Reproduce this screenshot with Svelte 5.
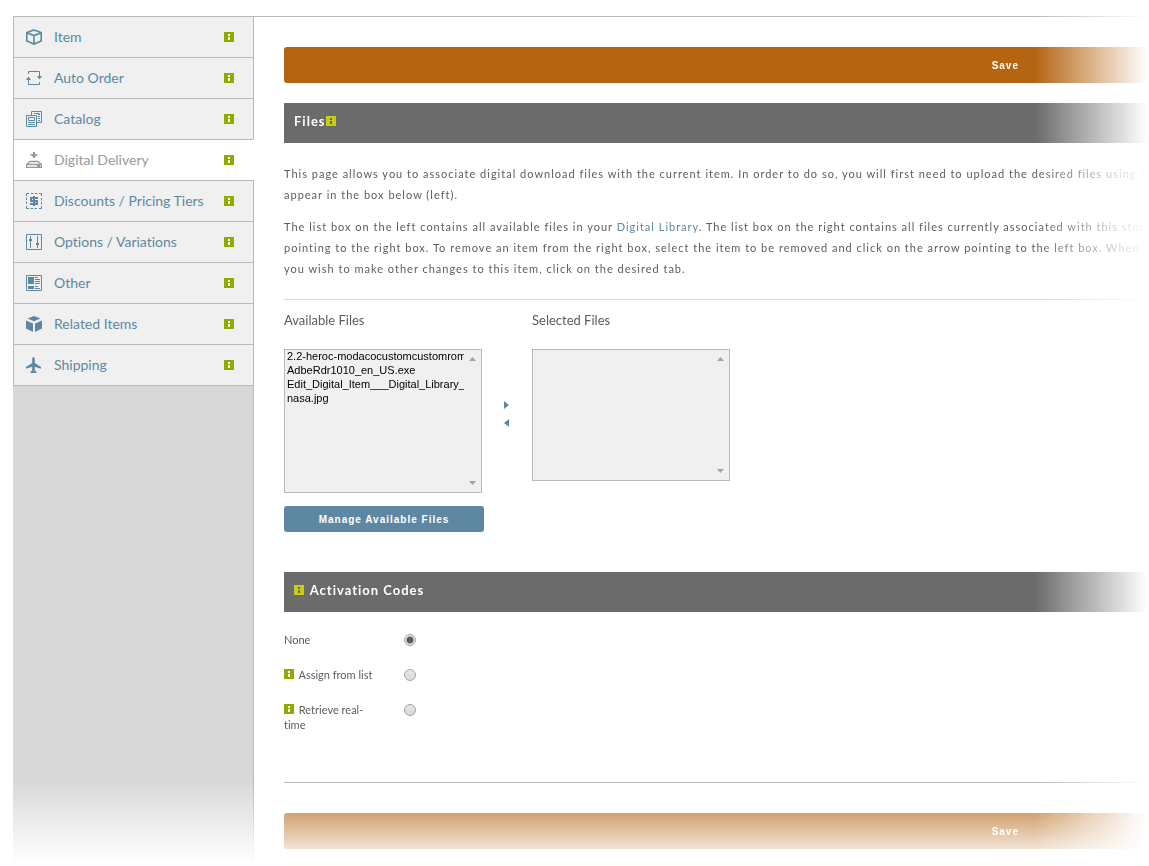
<script lang="ts">
  type Tab = { id: string; label: string };

  const tabs: Tab[] = [
    { id: 'item', label: 'Item' },
    { id: 'auto', label: 'Auto Order' },
    { id: 'catalog', label: 'Catalog' },
    { id: 'digital', label: 'Digital Delivery' },
    { id: 'discounts', label: 'Discounts / Pricing Tiers' },
    { id: 'options', label: 'Options / Variations' },
    { id: 'other', label: 'Other' },
    { id: 'related', label: 'Related Items' },
    { id: 'shipping', label: 'Shipping' }
  ];

  let current = $state('digital');
  let activation = $state('none');
  let available = $state([
    '2.2-heroc-modacocustomcustomrom',
    'AdbeRdr1010_en_US.exe',
    'Edit_Digital_Item___Digital_Library__',
    'nasa.jpg'
  ]);
  let selected: string[] = $state([]);
  let pickedLeft: string[] = $state([]);
  let pickedRight: string[] = $state([]);

  // move the picked files to the right box
  function addFiles() {
    selected = [...selected, ...pickedLeft];
    available = available.filter((f) => !pickedLeft.includes(f));
    pickedLeft = [];
  }

  // and back to the left one
  function removeFiles() {
    available = [...available, ...pickedRight];
    selected = selected.filter((f) => !pickedRight.includes(f));
    pickedRight = [];
  }
</script>

{#snippet info()}
  <svg class="info" viewBox="0 0 10 10" width="10" height="10" shape-rendering="crispEdges" aria-hidden="true">
    <rect class="info-bg" width="10" height="10" />
    <path class="info-mark" d="M4 2h2v2H4zM4 5h2v3H4z" />
  </svg>
{/snippet}

{#snippet icon(id: string)}
  <svg class="icon" viewBox="0 0 16 16" width="16" height="16" aria-hidden="true">
    {#if id === 'item'}
      <path class="line" stroke-width="1.6" d="M8 .9 15.2 3.6v8.3L8 15.1.8 11.9V3.6zM.8 3.8 8 6.6l7.2-2.8M8 6.6V15" />
    {:else if id === 'auto'}
      <path class="line" d="M2.500 4V1.500h11V6M13.500 12v2.500h-11V9" />
      <path d="M2.500 6.500 5 10H0zM13.500 9.500 11 6h5z" />
    {:else if id === 'catalog'}
      <path class="line" d="M.5 4.500h10v11H.5zM2.500 6.500h6v3h-6zM5.500 4V.5h10v11H11M2 11.500h7M2 13.500h7" />
      <path class="line" stroke-width="2" stroke-dasharray="1 1" d="M13 3v8" />
      <path class="line" d="M8 2.500h5.500" />
    {:else if id === 'digital'}
      <path d="M7 0h2v2h2.500v1.500H10v1H9V6H7V4.500H6v-1H4.500V2H7z" />
      <path class="line" stroke-width="1.3" d="M.6 15.400v-2.900l3.400-3h8l3.400 3v2.900zM1 12.500h14M11 14h3" />
    {:else if id === 'discounts'}
      <path class="line" d="M.5 3V.5H3M5 .5h2.500M9 .5h2.500M13 .5h2.500V3M15.500 5v2.500M15.500 9v2.500M15.500 13v2.500H13M11 15.500H8.500M7 15.500H4.500M3 15.500H.5V13M.5 11V8.500M.5 7V4.500" />
      <path class="line" stroke-width="2" d="M12 5H5v3h6v3H4" />
      <path class="line" stroke-width="2" d="M8 3v10" />
    {:else if id === 'options'}
      <path class="line" d="M.5.5h15v15H.5zM4.500 2v12M11.500 2v12" />
      <path d="M3 5h3v2H3zM10 9h3v2h-3z" />
    {:else if id === 'other'}
      <path class="line" d="M.5.5h15v15H.5zM9 2.500h3M9 4.500h5M9 6.500h5M9 8.500h5M9 11.500h3M9 13.500h5" />
      <path d="M2 2h6v7H2zM2 11h6v3H2z" />
    {:else if id === 'related'}
      <path d="M8 0l6.500 2.600L8 5.200 1.500 2.600zM0 4.500l7 3V16l-7-3.500zM16 4.500l-7 3V16l7-3.500z" />
    {:else}
      <path d="M7.500 0c.8 0 1.300 1.200 1.300 2.500V6L15 10v1.700L8.800 9.800v3.700l1.700 1.300V16h-6v-1.200l1.700-1.300V9.800L0 11.700V10l6.200-4V2.500C6.200 1.200 6.700 0 7.500 0z" />
    {/if}
  </svg>
{/snippet}

{#snippet scroller()}
  <span class="scroller" aria-hidden="true">
    <svg viewBox="0 0 7 4" width="7" height="4"><path d="M0 4 3.500 0 7 4z" /></svg>
    <svg viewBox="0 0 7 4" width="7" height="4"><path d="M0 0 3.500 4 7 0z" /></svg>
  </span>
{/snippet}

<div class="page">
  <nav class="sidebar">
    {#each tabs as tab}
      <a href="#{tab.id}" class="tab" class:active={current === tab.id} onclick={() => (current = tab.id)}>
        {@render icon(tab.id)}
        <span class="tab-label">{tab.label}</span>
        {@render info()}
      </a>
    {/each}
    <div class="filler"></div>
  </nav>

  <main class="content">
    <button class="save">Save</button>

    <h2 class="bar">Files{@render info()}</h2>

    <div class="intro">
      <p>
        This page allows you to associate digital download files with the current item. In order to do so, you will first need to upload the desired files using the<br />
        appear in the box below (left).
      </p>
      <p>
        The list box on the left contains all available files in your <a href="#library">Digital Library</a>. The list box on the right contains all files currently associated with this store<br />
        pointing to the right box. To remove an item from the right box, select the item to be removed and click on the arrow pointing to the left box. When you<br />
        you wish to make other changes to this item, click on the desired tab.
      </p>
    </div>

    <section class="files">
      <div class="column">
        <label for="available">Available Files</label>
        <div class="listbox tall">
          <select id="available" multiple bind:value={pickedLeft}>
            {#each available as file}
              <option value={file}>{file}</option>
            {/each}
          </select>
          {@render scroller()}
        </div>
        <button class="manage">Manage Available Files</button>
      </div>

      <div class="arrows">
        <button aria-label="Add" onclick={addFiles}>
          <svg viewBox="0 0 5 8" width="5" height="8"><path d="M0 0 5 4 0 8z" /></svg>
        </button>
        <button aria-label="Remove" onclick={removeFiles}>
          <svg viewBox="0 0 5 8" width="5" height="8"><path d="M5 0 0 4 5 8z" /></svg>
        </button>
      </div>

      <div class="column">
        <label for="selected">Selected Files</label>
        <div class="listbox">
          <select id="selected" multiple bind:value={pickedRight}>
            {#each selected as file}
              <option value={file}>{file}</option>
            {/each}
          </select>
          {@render scroller()}
        </div>
      </div>
    </section>

    <h2 class="bar codes">{@render info()} Activation Codes</h2>

    <div class="choices">
      <div class="choice">
        <label for="none">None</label>
        <input type="radio" id="none" name="activation" value="none" bind:group={activation} />
      </div>
      <div class="choice">
        <label for="assign">{@render info()} Assign from list</label>
        <input type="radio" id="assign" name="activation" value="assign" bind:group={activation} />
      </div>
      <div class="choice">
        <label for="retrieve">{@render info()} Retrieve real-time</label>
        <input type="radio" id="retrieve" name="activation" value="retrieve" bind:group={activation} />
      </div>
    </div>

    <div class="footer">
      <button class="save">Save</button>
    </div>
  </main>
</div>

<style>
  :global(body) {
    background: #fff;
  }

  /* the whole page fades out to the right and to the bottom */
  .page {
    box-sizing: border-box;
    display: flex;
    min-height: 100vh;
    padding: 16px 0 0 13px;
    overflow: hidden;
    font-family: Lato, sans-serif;
    font-variant-ligatures: none;
    color: #5c5c5c;
    mask-image: linear-gradient(to right, #000 calc(100% - 114px), transparent calc(100% - 2px)),
      linear-gradient(to bottom, #000 calc(100% - 86px), transparent calc(100% - 2px));
    mask-composite: intersect;
  }

  .sidebar {
    display: flex;
    flex-direction: column;
    flex: 0 0 241px;
  }

  .tab {
    box-sizing: border-box;
    display: flex;
    align-items: center;
    height: 41px;
    padding: 0 19px 0 12px;
    border: 1px solid #b9b9b9;
    border-bottom: 0;
    background: #f0f0f0;
    color: #5e88a1;
    font-size: 14px;
    text-decoration: none;
  }

  .tab.active {
    border-right-color: #fff;
    background: #fff;
    color: #999;
  }

  .tab-label {
    flex: 1;
    margin-left: 12px;
    padding-bottom: 2px;
  }

  .icon {
    fill: currentColor;
  }

  .line {
    fill: none;
    stroke: currentColor;
  }

  .filler {
    flex: 1;
    border-top: 1px solid #b9b9b9;
    border-right: 1px solid #b9b9b9;
    background: #d8d8d8;
  }

  .info-bg {
    fill: #90ab00;
  }

  .info-mark {
    fill: #fff;
  }

  .bar .info-bg {
    fill: #c8cd12;
  }

  .bar .info-mark {
    fill: #6b6b6b;
  }

  .codes .info,
  .choice .info {
    margin-right: 2px;
  }

  .content {
    flex: 1;
    min-width: 0;
    padding: 30px 0 0 30px;
    border-top: 1px solid #b9b9b9;
  }

  button {
    border: 0;
    cursor: pointer;
    font-family: "Liberation Sans", Arial, sans-serif;
    font-size: 10px;
    font-weight: bold;
    letter-spacing: 1px;
  }

  .save {
    display: block;
    width: 100%;
    height: 36px;
    padding: 0 130px 0 0;
    border-radius: 3px 0 0 3px;
    background: #b56512;
    color: #fff;
    text-align: right;
  }

  .bar {
    box-sizing: border-box;
    height: 40px;
    margin: 20px 0 0;
    padding: 0 10px;
    background: #6b6b6b;
    color: #fff;
    font-size: 13px;
    font-weight: bold;
    letter-spacing: 1px;
    line-height: 36px;
  }

  .intro {
    padding: 20px 0;
    border-bottom: 1px solid #d8d8d8;
    font-size: 11px;
    letter-spacing: 1px;
    line-height: 21px;
    white-space: nowrap;
  }

  .intro p {
    margin: 0 0 11px;
  }

  .intro p:last-child {
    margin: 0;
  }

  .intro a {
    color: #5e88a1;
    text-decoration: none;
  }

  .files {
    display: flex;
    align-items: flex-start;
    padding-top: 10px;
  }

  .column {
    width: 200px;
  }

  .column label {
    display: block;
    font-size: 13px;
    line-height: 20px;
  }

  .listbox {
    box-sizing: border-box;
    display: flex;
    width: 198px;
    height: 132px;
    margin-top: 19px;
    border: 1px solid #b9b9b9;
    background: #f0f0f0;
  }

  .listbox.tall {
    height: 144px;
  }

  select {
    flex: 1;
    min-width: 0;
    height: 100%;
    padding: 0;
    border: 0;
    outline: 0;
    background: transparent;
    color: #000;
    font-family: "Liberation Sans", Arial, sans-serif;
    font-size: 11px;
    scrollbar-width: none;
  }

  option {
    min-height: 14px;
    padding: 0 0 0 2px;
    line-height: 14px;
  }

  .scroller {
    display: flex;
    flex-direction: column;
    justify-content: space-between;
    align-items: center;
    width: 17px;
    padding: 7px 0;
    fill: #a3a3a3;
  }

  .manage {
    width: 200px;
    height: 26px;
    margin-top: 13px;
    border-radius: 3px;
    background: #5e88a1;
    color: #fff;
  }

  .arrows {
    display: flex;
    flex-direction: column;
    gap: 10px;
    width: 48px;
    padding-top: 91px;
  }

  .arrows button {
    display: flex;
    justify-content: center;
    padding: 0 4px 0 0;
    background: none;
    fill: #5e88a1;
  }

  .bar.codes {
    margin-top: 40px;
  }

  .choices {
    padding: 20px 0 50px;
    font-size: 11px;
    line-height: 15px;
  }

  .choice {
    display: flex;
    align-items: flex-start;
    margin-bottom: 20px;
  }

  .choice:last-child {
    margin-bottom: 0;
  }

  .choice label {
    width: 90px;
    margin-right: 30px;
  }

  input[type="radio"] {
    appearance: none;
    box-sizing: border-box;
    width: 12px;
    height: 12px;
    margin: 2px 0 0;
    border: 1px solid #a3a3a3;
    border-radius: 50%;
    background: linear-gradient(#e8e8e8, #d8d8d8);
  }

  input[type="radio"]:checked {
    background: radial-gradient(circle, #5c5c5c 3px, #e6e6e6 4px);
  }

  .footer {
    padding: 30px 0 17px;
    border-top: 1px solid #b9b9b9;
  }
</style>
